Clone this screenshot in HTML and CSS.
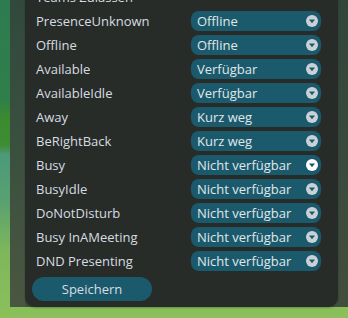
FILE: index.html
```html
<!DOCTYPE html>
<html lang="de">
<head>
<meta charset="utf-8">
<title>Teams Status</title>
<link rel="stylesheet" href="styles.css">
</head>
<body>
<div class="outer">
  <div class="panel">
    <div class="row"><span class="label">Teams Zulassen</span></div>
    <div class="row"><span class="label">PresenceUnknown</span><div class="select"><span>Offline</span><span class="caret"><svg viewBox="0 0 12 12" width="12" height="12"><path d="M3 4.6h6l-3 3.6z"/></svg></span></div></div>
    <div class="row"><span class="label">Offline</span><div class="select"><span>Offline</span><span class="caret"><svg viewBox="0 0 12 12" width="12" height="12"><path d="M3 4.6h6l-3 3.6z"/></svg></span></div></div>
    <div class="row"><span class="label">Available</span><div class="select"><span>Verfügbar</span><span class="caret"><svg viewBox="0 0 12 12" width="12" height="12"><path d="M3 4.6h6l-3 3.6z"/></svg></span></div></div>
    <div class="row"><span class="label">AvailableIdle</span><div class="select"><span>Verfügbar</span><span class="caret"><svg viewBox="0 0 12 12" width="12" height="12"><path d="M3 4.6h6l-3 3.6z"/></svg></span></div></div>
    <div class="row"><span class="label">Away</span><div class="select"><span>Kurz weg</span><span class="caret"><svg viewBox="0 0 12 12" width="12" height="12"><path d="M3 4.6h6l-3 3.6z"/></svg></span></div></div>
    <div class="row"><span class="label">BeRightBack</span><div class="select"><span>Kurz weg</span><span class="caret"><svg viewBox="0 0 12 12" width="12" height="12"><path d="M3 4.6h6l-3 3.6z"/></svg></span></div></div>
    <div class="row"><span class="label">Busy</span><div class="select"><span>Nicht verfügbar</span><span class="caret hot"><svg viewBox="0 0 12 12" width="12" height="12"><path d="M3 4.6h6l-3 3.6z"/></svg></span></div></div>
    <div class="row"><span class="label">BusyIdle</span><div class="select"><span>Nicht verfügbar</span><span class="caret"><svg viewBox="0 0 12 12" width="12" height="12"><path d="M3 4.6h6l-3 3.6z"/></svg></span></div></div>
    <div class="row"><span class="label">DoNotDisturb</span><div class="select"><span>Nicht verfügbar</span><span class="caret"><svg viewBox="0 0 12 12" width="12" height="12"><path d="M3 4.6h6l-3 3.6z"/></svg></span></div></div>
    <div class="row"><span class="label">Busy InAMeeting</span><div class="select"><span>Nicht verfügbar</span><span class="caret"><svg viewBox="0 0 12 12" width="12" height="12"><path d="M3 4.6h6l-3 3.6z"/></svg></span></div></div>
    <div class="row"><span class="label">DND Presenting</span><div class="select"><span>Nicht verfügbar</span><span class="caret"><svg viewBox="0 0 12 12" width="12" height="12"><path d="M3 4.6h6l-3 3.6z"/></svg></span></div></div>
    <button class="save">Speichern</button>
  </div>
</div>
</body>
</html>
```
FILE: styles.css
```css
html, body {
  margin: 0;
  height: 100%;
}
body {
  overflow: hidden;
  font-family: "Open Sans", "Noto Sans", sans-serif;
  background: linear-gradient(to bottom, #2c7c50 0, #2f7f4a 100px, #3b8a2e 118px, #3f8c32 145px, #4c9a7c 155px, #58a070 200px, #7db65c 250px, #8bc05a 318px);
}
.outer {
  margin-left: 10px;
  min-height: 100vh;
  padding-left: 15px;
  background:
    linear-gradient(to right, rgba(0,0,0,0) 0, rgba(0,0,0,0) 15px, rgba(52,62,55,0.35) 15px),
    linear-gradient(to bottom, #30493c 0, #3a4f3f 150px, #4a5740 318px);
}
.panel {
  width: 313px;
  box-sizing: border-box;
  margin-top: -13px;
  padding: 0 17px 6px 11px;
  background: #282c29;
  border-radius: 0 0 10px 10px;
  box-shadow: 0 1px 2px rgba(0,0,0,0.25);
  display: flex;
  flex-direction: column;
  gap: 4px;
}
.row {
  display: grid;
  grid-template-columns: 155px 130px;
  height: 20px;
  align-items: center;
}
.label {
  color: #d6dce0;
  font-size: 13px;
  line-height: 20px;
  white-space: nowrap;
}
.select {
  height: 20px;
  border-radius: 8px;
  background: #1b5a6c;
  display: flex;
  align-items: center;
  justify-content: space-between;
  padding: 0 3px 0 6px;
  color: #e0e7ea;
  font-size: 13px;
  line-height: 20px;
  white-space: nowrap;
}
.caret {
  width: 12px;
  height: 12px;
  border-radius: 50%;
  background: #c9d3d7;
  display: flex;
}
.caret svg {
  fill: #1b5a6c;
}
.caret.hot {
  background: #ffffff;
}
.save {
  margin: 2px 0 0 -4px;
  width: 120px;
  height: 24px;
  border: none;
  border-radius: 12px;
  background: #1b5a6c;
  color: #d6dee2;
  font-family: "Open Sans", "Noto Sans", sans-serif;
  font-size: 13px;
  padding: 0;
}
```
